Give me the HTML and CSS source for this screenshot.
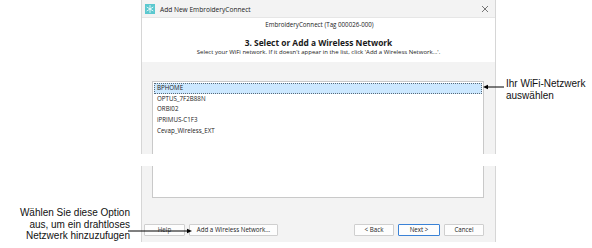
FILE: index.html
```html
<!DOCTYPE html>
<html>
<head>
<meta charset="utf-8">
<link rel="stylesheet" href="styles.css">
</head>
<body>
<div class="page">
  <div class="dialog">
    <div class="titlebar">
      <svg class="appicon" width="10" height="10" viewBox="0 0 10 10">
        <rect width="10" height="10" fill="#5bc8cf"/>
        <g stroke="#ffffff" stroke-width="0.8" stroke-linecap="round">
          <line x1="5" y1="1.5" x2="5" y2="8.5"/>
          <line x1="2" y1="3.2" x2="8" y2="6.8"/>
          <line x1="2" y1="6.8" x2="8" y2="3.2"/>
        </g>
      </svg>
      <span class="title">Add New EmbroideryConnect</span>
      <svg class="close" width="8" height="8" viewBox="0 0 8 8">
        <path d="M1 1L7 7M7 1L1 7" stroke="#555" stroke-width="0.8"/>
      </svg>
    </div>
    <div class="header">
      <div class="tag">EmbroideryConnect (Tag 000026-000)</div>
      <div class="step">3. Select or Add a Wireless Network</div>
      <div class="hint">Select your WiFi network. If it doesn't appear in the list, click 'Add a Wireless Network...'.</div>
    </div>
    <div class="body">
      <div class="listbox">
        <div class="item selected">BPHOME</div>
        <div class="item">OPTUS_7F2B88N</div>
        <div class="item">ORBI02</div>
        <div class="item">iPRIMUS-C1F3</div>
        <div class="item">Cevap_Wireless_EXT</div>
      </div>
      <div class="buttons">
        <div class="btn help">Help</div>
        <div class="btn add">Add a Wireless Network...</div>
        <div class="spacer"></div>
        <div class="btn back">&lt; Back</div>
        <div class="btn next">Next &gt;</div>
        <div class="btn cancel">Cancel</div>
      </div>
    </div>
    <div class="cut"></div>
  </div>

  <div class="callout right-callout">
    <svg class="arrow-r" width="22" height="6" viewBox="0 0 22 6">
      <line x1="3" y1="3" x2="21" y2="3" stroke="#000" stroke-width="1"/>
      <path d="M0 3L5 0.8L5 5.2Z" fill="#000"/>
    </svg>
    <div class="note">Ihr WiFi-Netzwerk<br>auswählen</div>
  </div>

  <div class="callout left-callout">
    <div class="note left">Wählen Sie diese Option<br>aus, um ein drahtloses<br>Netzwerk hinzuzufugen</div>
  </div>
  <svg class="arrow-l" width="64" height="6" viewBox="0 0 64 6">
    <line x1="0" y1="3" x2="60" y2="3" stroke="#000" stroke-width="1"/>
    <path d="M64 3L59 0.8L59 5.2Z" fill="#000"/>
  </svg>
</div>
</body>
</html>
```

FILE: styles.css
```css
html, body {
  margin: 0;
  padding: 0;
  background: #ffffff;
}
.page {
  position: relative;
  width: 592px;
  height: 248px;
  overflow: hidden;
}
.dialog {
  position: relative;
  margin-left: 141px;
  width: 353px;
  height: 242px;
  border-left: 1px solid #d6d6d6;
  border-right: 1px solid #d6d6d6;
  background: #f3f3f3;
  display: flex;
  flex-direction: column;
  font-family: "Open Sans", "Noto Sans", sans-serif;
  color: #1a1a1a;
}
.titlebar {
  height: 18px;
  display: flex;
  align-items: center;
  padding: 1px 6px 0 3px;
  background: #f3f3f3;
  border-bottom: 1px solid #e6e6e6;
  box-sizing: border-box;
}
.appicon { flex: none; }
.title {
  margin-left: 5px;
  font-size: 6.6px;
  color: #222;
  flex: 1;
}
.close { flex: none; }
.header {
  background: #ffffff;
  height: 44px;
  box-sizing: border-box;
  padding-top: 2px;
  text-align: center;
}
.tag {
  font-size: 6.2px;
  line-height: 10px;
  padding-left: 2px;
}
.step {
  margin-top: 7px;
  font-size: 8.4px;
  font-weight: 700;
  line-height: 11px;
}
.hint {
  font-size: 6px;
  line-height: 9px;
}
.body {
  flex: 1;
  display: flex;
  flex-direction: column;
  padding: 19px 11px 6px 2px;
}
.listbox {
  margin-left: 8px;
  height: 117px;
  background: #ffffff;
  border: 1px solid #c9c9c9;
  padding: 1px 1px;
  box-sizing: border-box;
}
.item {
  height: 10.7px;
  line-height: 10.7px;
  font-size: 6.2px;
  padding-left: 3px;
  color: #222;
  box-sizing: border-box;
}
.item.selected {
  background: #cce8ff;
  border: 1px dotted #5a6a78;
  line-height: 8.7px;
  padding-left: 2px;
}
.buttons {
  margin-top: auto;
  display: flex;
  align-items: center;
  gap: 4px;
}
.btn {
  height: 12px;
  box-sizing: border-box;
  border: 1px solid #cfcfcf;
  background: #fdfdfd;
  font-size: 6.2px;
  line-height: 10px;
  text-align: center;
  color: #222;
  border-radius: 1px;
}
.help { width: 41px; color: #444; }
.add { width: 89px; }
.spacer { flex: 1; }
.back { width: 40px; }
.next { width: 42px; border-color: #3a82d6; }
.cancel { width: 40px; }
.cut {
  position: absolute;
  left: -2px;
  right: -2px;
  top: 154px;
  height: 12px;
  background: #ffffff;
}
.callout {
  position: absolute;
}
.note {
  font-family: "Liberation Sans", Arial, sans-serif;
  font-size: 10px;
  line-height: 11.5px;
  color: #111;
}
.note.left { text-align: right; }
.right-callout {
  left: 483px;
  top: 78px;
  display: flex;
  align-items: flex-start;
  gap: 1px;
}
.arrow-r { margin-top: 6px; }
.left-callout {
  right: 462px;
  top: 207px;
}
.arrow-l {
  position: absolute;
  left: 128px;
  top: 228px;
}
```
